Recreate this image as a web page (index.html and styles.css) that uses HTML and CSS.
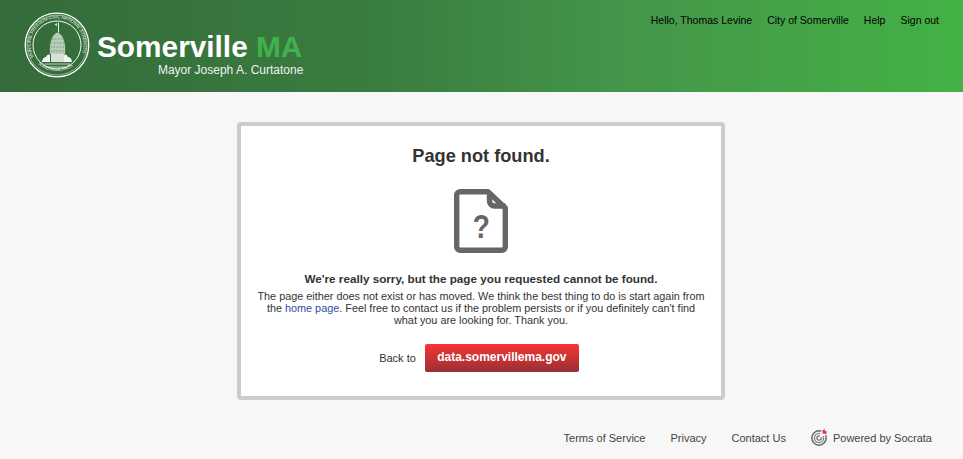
FILE: index.html
```html
<!DOCTYPE html>
<html lang="en">
<head>
    <meta charset="UTF-8">
    <title>Somerville MA - Page not found</title>
    <link rel="stylesheet" href="styles.css">
</head>
<body>

<header class="site-header">
    <div class="brand">
        <svg class="seal" width="66" height="66" viewBox="0 0 66 66">
            <defs>
                <path id="seal-top" d="M9.500 45a26.500 26.500 0 1 1 47 0"></path>
                <path id="seal-bottom" d="M14 52a29.500 29.500 0 0 0 38 0"></path>
            </defs>
            <circle cx="33" cy="33" r="31.800" fill="none" stroke="#fff" stroke-width="1.300"></circle>
            <circle cx="33" cy="33" r="30" fill="none" stroke="#dfe9df" stroke-width=".5"></circle>
            <circle cx="33" cy="33" r="24" fill="none" stroke="#f4f8f4" stroke-width="1"></circle>
            <text class="seal-text"><textPath href="#seal-top" textLength="104">MUNICIPAL FREEDOM CIVIC NATIONAL STRENGTH</textPath></text>
            <text class="seal-text"><textPath href="#seal-bottom" textLength="38">SOMERVILLE, MASS.</textPath></text>
            <path d="M34.100 10.500h.9v10h-.9z" fill="#fff"></path>
            <path d="M33 11l-2.500 1.500 2.500 1.500z" fill="#dfe9df"></path>
            <path d="M26 42c-1-11 2-20 7.500-21.500 5.500 1.500 8.500 10.500 7.500 21.500z" fill="#b9ccba"></path>
            <path d="M28 27h11M27 31h13M26.500 35h14M26.500 39h14" stroke="#6b9470" stroke-width="1" stroke-dasharray="1.500 1.500"></path>
            <path d="M18 50c0-3 2-5 4-5 1-2 2-3 4-2v7zM48 50c0-3-2-5-4-5-1-2-2-3-4-2v7z" fill="#f2f6f2"></path>
            <path d="M27 42h13v8H27z" fill="#d5e1d5"></path>
            <path d="M21 52h25M26 55h15" stroke="#e4ece4" stroke-width=".8"></path>
        </svg>
        <div class="brand-text">
            <div class="brand-name">Somerville <span class="brand-state">MA</span></div>
            <div class="brand-sub">Mayor Joseph A. Curtatone</div>
        </div>
    </div>
    <nav class="user-nav">
        <a href="#">Hello, Thomas Levine</a>
        <a href="#">City of Somerville</a>
        <a href="#">Help</a>
        <a href="#">Sign out</a>
    </nav>
</header>

<section class="error-card">
    <h1>Page not found.</h1>
    <svg class="doc-icon" width="54" height="64" viewBox="0 0 54 64">
        <path d="M6 2.700h28l17.300 16.300v38.800a3.500 3.500 0 0 1-3.500 3.500H6.200a3.500 3.500 0 0 1-3.500-3.500V6.200a3.500 3.500 0 0 1 3.500-3.500z" fill="none" stroke="#666" stroke-width="5.400" stroke-linejoin="round"></path>
        <path d="M35.500 3v9a5 5 0 0 0 5 5h11" fill="none" stroke="#666" stroke-width="5.400"></path>
        <text class="doc-mark" transform="translate(27.300 48.700) scale(.85 1)">?</text>
    </svg>
    <h2>We're really sorry, but the page you requested cannot be found.</h2>
    <p>The page either does not exist or has moved. We think the best thing to do is start again from the <a href="#">home page</a>. Feel free to contact us if the problem persists or if you definitely can't find what you are looking for. Thank you.</p>
    <div class="back-row">
        <span>Back to</span>
        <a class="back-button" href="#">data.somervillema.gov</a>
    </div>
</section>

<footer class="site-footer">
    <a href="#">Terms of Service</a>
    <a href="#">Privacy</a>
    <a href="#">Contact Us</a>
    <a class="powered" href="#">
        <svg width="17" height="17" viewBox="0 0 17 17">
            <circle cx="8" cy="9" r="7.200" fill="none" stroke="#666" stroke-width="1.500"></circle>
            <circle cx="8" cy="9" r="4.600" fill="none" stroke="#888" stroke-width="1.400"></circle>
            <circle cx="8" cy="9" r="2.200" fill="none" stroke="#666" stroke-width="1.200"></circle>
            <path d="M8 9l3-9h6v5z" fill="#f7f7f7"></path>
            <path d="M11.500 1.500l2-1.500.5 2 2 .5-1 2.500-3.500-.5z" fill="#e8323a"></path>
        </svg>
        Powered by Socrata
    </a>
</footer>

</body>
</html>
```

FILE: styles.css
```css
body {
    margin: 0;
    padding-right: 1px;
    background-color: #f7f7f7;
    color: #333;
    font-family: "Liberation Sans", Arial, sans-serif;
    font-size: 11px;
}
a {
    text-decoration: none;
}
.site-header {
    height: 92px;
    margin-right: -1px;
    display: flex;
    justify-content: space-between;
    background: linear-gradient(to right, #346b3a 0%, #3a7d40 40%, #45964a 65%, #43b245 100%);
}
.brand {
    display: flex;
    align-items: flex-start;
    padding: 12px 0 0 24px;
}
.seal {
    flex: none;
}
.brand-text {
    margin: 18px 0 0 7px;
    text-align: right;
}
.seal-text {
    fill: #eef3ee;
    font-size: 4.500px;
}
.brand-name {
    padding-right: 2px;
    color: white;
    font-size: 29.800px;
    font-weight: bold;
    line-height: 33px;
}
.brand-state {
    color: #41b24b;
}
.brand-sub {
    padding-right: 1px;
    color: #f0f0f0;
    font-size: 12px;
    line-height: 14px;
}
.user-nav {
    display: flex;
    gap: 15px;
    padding: 14px 24px 0 0;
    font-size: 10.500px;
    line-height: 13px;
}
.user-nav a {
    color: black;
}
.error-card {
    box-sizing: border-box;
    width: 488px;
    height: 278px;
    margin: 30px auto 0;
    padding: 19px 14px 0;
    background-color: white;
    border: 4px solid #ccc;
    border-radius: 4px;
    text-align: center;
}
.error-card h1 {
    margin: 0;
    font-size: 18.200px;
    line-height: 22px;
}
.doc-icon {
    display: block;
    margin: 22px auto 0;
}
.doc-mark {
    fill: #666;
    font-size: 33px;
    font-weight: bold;
    text-anchor: middle;
}
.error-card h2 {
    margin: 19px 0 0;
    font-size: 11.700px;
    line-height: 14px;
}
.error-card p {
    margin: 4px 0 0;
    font-size: 10.850px;
    line-height: 12px;
}
.error-card p a {
    color: #2f4f9f;
}
.back-row {
    display: flex;
    justify-content: center;
    align-items: center;
    gap: 9px;
    margin: 18px 4px 0 0;
}
.back-button {
    width: 154px;
    height: 28px;
    box-sizing: border-box;
    background: linear-gradient(to bottom, #f93535, #973033);
    border-radius: 2px;
    color: white;
    font-size: 12px;
    font-weight: bold;
    line-height: 27px;
}
.site-footer {
    display: flex;
    justify-content: flex-end;
    align-items: center;
    gap: 25px;
    padding: 29px 30px 0 0;
}
.site-footer a {
    color: #444;
}
.powered {
    display: flex;
    align-items: center;
    gap: 5px;
}
```
